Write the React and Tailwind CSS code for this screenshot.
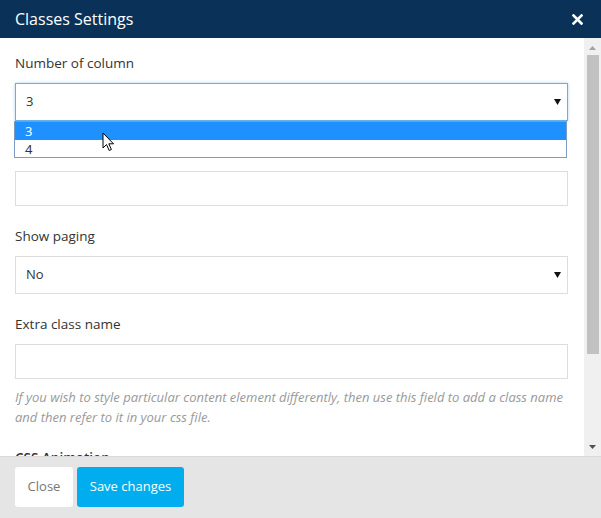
import React from "react";

const font = { fontFamily: '"Open Sans", "Liberation Sans", sans-serif' };

function Caret() {
  return (
    <svg width="7" height="6" viewBox="0 0 7 6" className="block">
      <path d="M0 0 H7 L3.5 6 Z" fill="#111" />
    </svg>
  );
}

function Label({ children }) {
  return <div className="text-[13.5px] leading-5 text-[#333] mb-[10px]">{children}</div>;
}

export default function App() {
  return (
    <div className="w-[601px] h-[518px] flex flex-col bg-white overflow-hidden" style={font}>
      {/* Header */}
      <div className="h-[38px] shrink-0 bg-[#0a3158] flex items-center justify-between pl-[15px] pr-[18px]">
        <h1 className="text-[16px] text-white leading-none">Classes Settings</h1>
        <svg width="11" height="11" viewBox="0 0 11 11">
          <path d="M1.5 1.5 L9.5 9.5 M9.5 1.5 L1.5 9.5" stroke="#fff" strokeWidth="2.6" strokeLinecap="square" />
        </svg>
      </div>

      {/* Body */}
      <div className="flex-1 flex min-h-0">
        <div className="flex-1 min-w-0 overflow-hidden pl-[15px] pr-[16px] pt-[15px]">
          {/* Number of column */}
          <Label>Number of column</Label>
          <div className="relative">
            <div className="h-[38px] border border-[#66afe9] shadow-[0_0_3px_rgba(102,175,233,0.5)] flex items-center justify-between pl-[10px] pr-[6px] text-[13px] text-[#333]">
              <span>3</span>
              <Caret />
            </div>
            <div className="absolute left-[-1px] right-[1px] top-[38px] z-10 bg-white border border-[#7a9cc5] text-[13px] leading-[18px]" style={{ fontFamily: '"Noto Sans", "Liberation Sans", sans-serif' }}>
              <div className="h-[18px] bg-[#1e90ff] text-white pl-[10px]">3</div>
              <div className="h-[17px] text-[#333] pl-[10px]">4</div>
              <svg className="absolute left-[87px] top-[10px]" width="13" height="20" viewBox="0 0 13 20">
                <path d="M1 1 V16 L4.5 12.5 L7.2 18.5 L9.4 17.5 L6.8 11.8 H11.5 Z" fill="#fff" stroke="#000" strokeWidth="1" strokeLinejoin="round" />
              </svg>
            </div>
          </div>

          {/* hidden field label (covered by open list) */}
          <div className="h-[20px] mt-[20px] mb-[10px]" />
          <div className="h-[35px] border border-[#dddddd]" />

          {/* Show paging */}
          <div className="mt-[20px]">
            <Label>Show paging</Label>
          </div>
          <div className="h-[38px] border border-[#dddddd] flex items-center justify-between pl-[10px] pr-[6px] text-[13px] text-[#333]">
            <span>No</span>
            <Caret />
          </div>

          {/* Extra class name */}
          <div className="mt-[20px]">
            <Label>Extra class name</Label>
          </div>
          <div className="h-[35px] border border-[#dddddd]" />
          <p className="mt-[8px] text-[13px] leading-5 italic text-[#999]">
            If you wish to style particular content element differently, then use this field to add a class name and then refer to it in your css file.
          </p>

          <div className="mt-[21px] text-[13.5px] leading-5 text-[#333] font-semibold">CSS Animation</div>
        </div>

        {/* Scrollbar */}
        <div className="w-[17px] shrink-0 bg-[#f0f0f0] flex flex-col items-center pt-[8px] pb-[7px]">
          <svg width="7" height="4" viewBox="0 0 7 4">
            <path d="M0 4 H7 L3.5 0 Z" fill="#a3a3a3" />
          </svg>
          <div className="w-[12px] h-[299px] bg-[#c1c1c1] mt-[5px]" />
          <div className="flex-1" />
          <svg width="7" height="4" viewBox="0 0 7 4">
            <path d="M0 0 H7 L3.5 4 Z" fill="#505050" />
          </svg>
        </div>
      </div>

      {/* Footer */}
      <div className="h-[62px] shrink-0 bg-[#e5e5e5] border-t border-[#dadada] flex items-start gap-[4px] pl-[15px] pt-[10px]">
        <button className="h-[40px] w-[58px] bg-white rounded-[3px] text-[13px] text-[#777]">Close</button>
        <button className="h-[40px] w-[107px] bg-[#00aeef] rounded-[3px] text-[13px] text-white">Save changes</button>
      </div>
    </div>
  );
}
